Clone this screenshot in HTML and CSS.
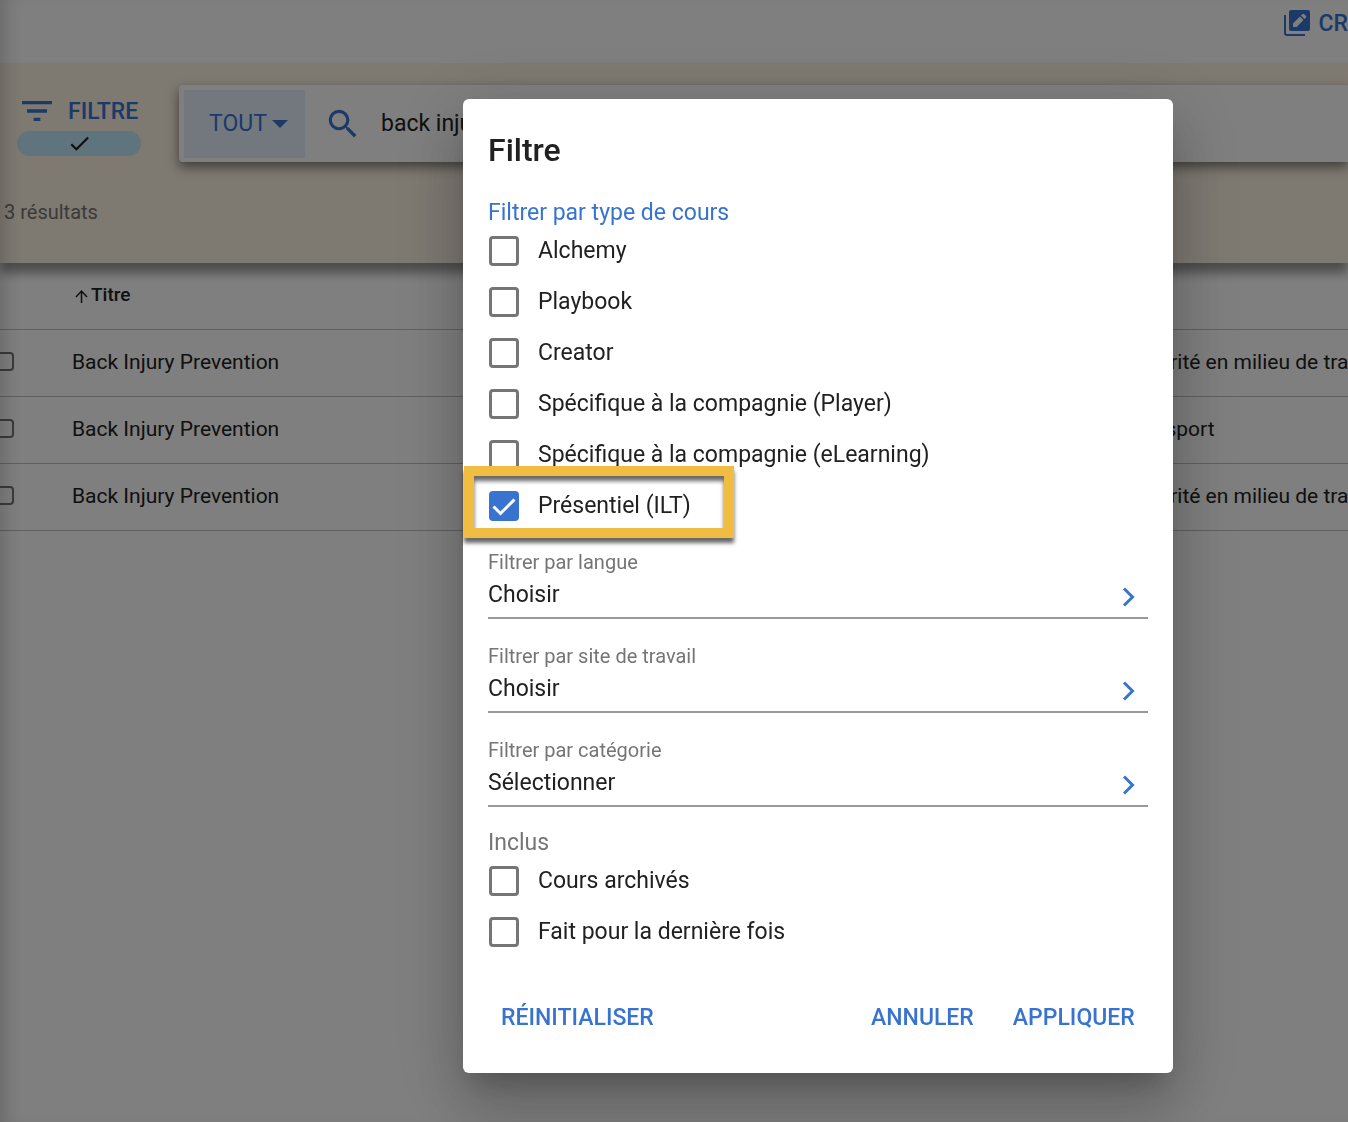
FILE: index.html
```html
<!DOCTYPE html>
<html lang="fr">

<head>
    <meta charset="UTF-8" />
    <meta name="viewport" content="width=device-width, initial-scale=1.0" />
    <title>Filtre</title>
    <link rel="stylesheet" href="styles.css">
</head>

<body>
    <div class="page">
        <header class="topbar">
            <button class="create" type="button">
                <svg width="28" height="28" viewBox="0 0 28 28" aria-hidden="true">
                    <path d="M2 6v18a2 2 0 0 0 2 2h18" fill="none" stroke="currentColor" stroke-width="2" />
                    <rect x="6" y="1" width="21" height="21" rx="2" fill="currentColor" />
                    <path d="M10 14.500v3.500h3.500l7-7-3.500-3.500zM18 6.500l3.500 3.500 1.500-1.500a1 1 0 0 0 0-1.400l-2-2a1 1 0 0 0-1.400 0z" fill="#fff" />
                </svg>
                <span>CR</span>
            </button>
        </header>

        <section class="searchband">
            <div class="searchrow">
                <button class="filter" type="button">
                    <span class="filter-label">
                        <svg width="40" height="40" viewBox="0 0 24 24" aria-hidden="true">
                            <path d="M10 18h4v-2h-4v2zM3 6v2h18V6H3zm3 7h12v-2H6v2z" fill="currentColor" />
                        </svg>
                        FILTRE
                    </span>
                    <span class="filter-badge">
                        <svg width="25" height="25" viewBox="0 0 24 24" aria-hidden="true">
                            <path d="M9 16.170 4.830 12l-1.420 1.410L9 19 21 7l-1.410-1.410z" fill="#1f1f1f" />
                        </svg>
                    </span>
                </button>
                <div class="searchbox">
                    <button class="scope" type="button">
                        TOUT
                        <svg width="16" height="8" viewBox="0 0 16 8" aria-hidden="true">
                            <path d="M0 0h16L8 8z" fill="currentColor" />
                        </svg>
                    </button>
                    <svg class="search-icon" width="38" height="38" viewBox="0 0 24 24" aria-hidden="true">
                        <path d="M15.500 14h-.790l-.280-.270A6.470 6.470 0 0 0 16 9.500 6.500 6.500 0 1 0 9.500 16c1.610 0 3.090-.590 4.230-1.570l.270.280v.790l5 4.990L20.490 19l-4.990-5zm-6 0C7.010 14 5 11.990 5 9.500S7.010 5 9.500 5 14 7.010 14 9.500 11.990 14 9.500 14z" fill="currentColor" />
                    </svg>
                    <input class="search-input" type="text" value="back injury" aria-label="Recherche" />
                </div>
            </div>
            <p class="count">3 résultats</p>
        </section>

        <table class="results">
            <thead>
                <tr>
                    <th class="col-check"></th>
                    <th class="col-title">
                        <svg width="15" height="15" viewBox="0 0 15 15" aria-hidden="true">
                            <path d="M7.500 14V2M2 8l5.500-6L13 8" fill="none" stroke="currentColor" stroke-width="1.500" />
                        </svg>Titre
                    </th>
                    <th class="col-category"></th>
                </tr>
            </thead>
            <tbody>
                <tr>
                    <td><input type="checkbox" aria-label="Choisir le cours 1" /></td>
                    <td>Back Injury Prevention</td>
                    <td>Sécurité en milieu de travail</td>
                </tr>
                <tr>
                    <td><input type="checkbox" aria-label="Choisir le cours 2" /></td>
                    <td>Back Injury Prevention</td>
                    <td>Transport</td>
                </tr>
                <tr>
                    <td><input type="checkbox" aria-label="Choisir le cours 3" /></td>
                    <td>Back Injury Prevention</td>
                    <td>Sécurité en milieu de travail</td>
                </tr>
            </tbody>
        </table>
    </div>

    <!-- Filter dialog -->
    <div class="overlay">
        <form class="dialog" role="dialog" aria-labelledby="dialogTitle">
            <h1 id="dialogTitle">Filtre</h1>

            <fieldset>
                <legend class="accent">Filtrer par type de cours</legend>
                <label class="option"><input type="checkbox" />Alchemy</label>
                <label class="option"><input type="checkbox" />Playbook</label>
                <label class="option"><input type="checkbox" />Creator</label>
                <label class="option"><input type="checkbox" />Spécifique à la compagnie (Player)</label>
                <label class="option"><input type="checkbox" />Spécifique à la compagnie (eLearning)</label>
                <label class="option highlighted"><input type="checkbox" checked />Présentiel (ILT)</label>
            </fieldset>

            <div class="fields">
                <div class="field">
                    <span class="field-label" id="langue">Filtrer par langue</span>
                    <button class="picker" type="button" aria-describedby="langue">
                        Choisir
                        <svg width="14" height="20" viewBox="0 0 14 20" aria-hidden="true">
                            <path d="M2 1.500 10.500 10 2 18.500" fill="none" stroke="currentColor" stroke-width="3" />
                        </svg>
                    </button>
                </div>
                <div class="field">
                    <span class="field-label" id="site">Filtrer par site de travail</span>
                    <button class="picker" type="button" aria-describedby="site">
                        Choisir
                        <svg width="14" height="20" viewBox="0 0 14 20" aria-hidden="true">
                            <path d="M2 1.500 10.500 10 2 18.500" fill="none" stroke="currentColor" stroke-width="3" />
                        </svg>
                    </button>
                </div>
                <div class="field">
                    <span class="field-label" id="categorie">Filtrer par catégorie</span>
                    <button class="picker" type="button" aria-describedby="categorie">
                        Sélectionner
                        <svg width="14" height="20" viewBox="0 0 14 20" aria-hidden="true">
                            <path d="M2 1.500 10.500 10 2 18.500" fill="none" stroke="currentColor" stroke-width="3" />
                        </svg>
                    </button>
                </div>
            </div>

            <fieldset>
                <legend>Inclus</legend>
                <label class="option"><input type="checkbox" />Cours archivés</label>
                <label class="option"><input type="checkbox" />Fait pour la dernière fois</label>
            </fieldset>

            <div class="actions">
                <button class="reset" type="reset">RÉINITIALISER</button>
                <button type="button">ANNULER</button>
                <button type="submit">APPLIQUER</button>
            </div>
        </form>
    </div>
</body>

</html>
```

FILE: styles.css
```css
* {
    box-sizing: border-box;
}

body {
    margin: 0;
    height: 100vh;
    overflow: hidden;
    font-family: Roboto, sans-serif;
    font-size: 23px;
    color: #212121;
    background-color: #fff;
}

button,
input {
    font: inherit;
    color: inherit;
}

button {
    padding: 0;
    border: none;
    background: none;
    color: #3874cf;
    cursor: pointer;
}

svg {
    flex: none;
}

/* Page behind the dialog */
.page {
    height: 100%;
    overflow: hidden;
}

.topbar {
    display: flex;
    justify-content: flex-end;
    height: 63px;
    padding-top: 9px;
}

.create {
    display: flex;
    align-items: center;
    gap: 8px;
    height: 28px;
    font-weight: 500;
    white-space: nowrap;
}

.searchband {
    height: 200px;
    padding-top: 22px;
    background-color: #fdf2e3;
    box-shadow: 0 10px 10px rgba(0, 0, 0, 0.4);
}

.searchrow {
    display: flex;
    gap: 38px;
    padding-left: 17px;
}

.filter {
    flex: none;
    align-self: flex-start;
    width: 124px;
    padding-top: 6px;
    font-weight: 500;
}

.filter-label {
    display: flex;
    align-items: center;
    gap: 11px;
}

.filter-badge {
    display: flex;
    align-items: center;
    justify-content: center;
    height: 25px;
    border-radius: 13px;
    background-color: #bee8f8;
}

.searchbox {
    flex: 1;
    display: flex;
    align-items: center;
    height: 77px;
    padding: 5px;
    border-radius: 4px 0 0 4px;
    background-color: #fff;
    box-shadow: 0 5px 12px rgba(0, 0, 0, 0.5);
}

.scope {
    display: flex;
    align-items: center;
    justify-content: center;
    gap: 5px;
    width: 121px;
    height: 68px;
    padding-left: 8px;
    background-color: #e7f0ff;
}

.search-icon {
    margin: 0 19px;
    color: #3874cf;
}

.search-input {
    flex: 1;
    padding: 0;
    border: none;
    outline: none;
    background: none;
}

.count {
    margin: 38px 0 0;
    padding-left: 4px;
    font-size: 20px;
    line-height: 24px;
    color: #757575;
}

.results {
    width: 100%;
    table-layout: fixed;
    border-collapse: collapse;
    white-space: nowrap;
    font-size: 21px;
}

.results th,
.results td {
    height: 67px;
    padding: 0 0 2px;
    border-bottom: 1px solid #c0c0c0;
    text-align: left;
}

.results th {
    height: 66px;
    font-size: 19px;
    font-weight: 500;
}

.results svg {
    margin: 0 2px;
    vertical-align: -3px;
}

.col-check {
    width: 72px;
}

.col-category {
    width: 224px;
}

.results input {
    appearance: none;
    display: block;
    width: 19px;
    height: 19px;
    margin: 0 0 0 -5px;
    border: 2px solid #757575;
    border-radius: 4px;
}

/* Dialog */
.overlay {
    position: fixed;
    inset: 0;
    padding: 99px 13% 49px 463px;
    background-color: rgba(0, 0, 0, 0.5);
    box-shadow: inset 16px 0 20px -12px rgba(0, 0, 0, 0.2);
}

.dialog {
    padding: 31px 25px 28px;
    border-radius: 6px;
    background-color: #fff;
    box-shadow: 0 18px 24px -10px rgba(0, 0, 0, 0.2),
        0 38px 60px 5px rgba(0, 0, 0, 0.14),
        0 14px 72px 12px rgba(0, 0, 0, 0.12);
}

h1 {
    margin: 0 0 31px;
    font-size: 32px;
    font-weight: 500;
    line-height: 40px;
}

fieldset {
    margin: 0;
    padding: 0;
    border: none;
}

legend {
    padding: 0;
    line-height: 24px;
    color: #757575;
}

.accent {
    color: #3874cf;
}

.option {
    position: relative;
    display: flex;
    align-items: center;
    gap: 19px;
    height: 51px;
    padding-left: 1px;
}

.option input {
    appearance: none;
    width: 30px;
    height: 30px;
    margin: 0;
    border: 3px solid #757575;
    border-radius: 4px;
}

.option input:checked {
    border-color: #3874cf;
    background: #3874cf url("data:image/svg+xml,<svg xmlns='http://www.w3.org/2000/svg' viewBox='0 0 24 24'><path d='M1.500 12.500 8.500 19.500 22.500 5.500' fill='none' stroke='white' stroke-width='3'/></svg>") center / 24px no-repeat;
}

/* Yellow callout frame drawn around one option */
.highlighted::after {
    content: "";
    box-sizing: border-box;
    position: absolute;
    top: -14px;
    left: -24px;
    width: 270px;
    height: 72px;
    border: 10px solid #f0bc42;
    box-shadow: 0 5px 4px rgba(0, 0, 0, 0.6), inset 0 5px 4px rgba(0, 0, 0, 0.6);
}

.fields {
    display: grid;
    gap: 25px;
    margin: 19px 0 24px;
}

.field-label {
    display: block;
    font-size: 20px;
    line-height: 24px;
    color: #757575;
}

.picker {
    display: flex;
    align-items: center;
    justify-content: space-between;
    width: 100%;
    height: 45px;
    padding: 0 12px 2px 0;
    border-bottom: 2px solid #999;
    color: #212121;
}

.picker svg {
    margin-top: 4px;
    color: #3874cf;
}

.actions {
    display: flex;
    gap: 13px;
    margin-top: 32px;
}

.actions button {
    height: 56px;
    padding: 0 13px;
    font-weight: 500;
}

.reset {
    margin-right: auto;
}
```
